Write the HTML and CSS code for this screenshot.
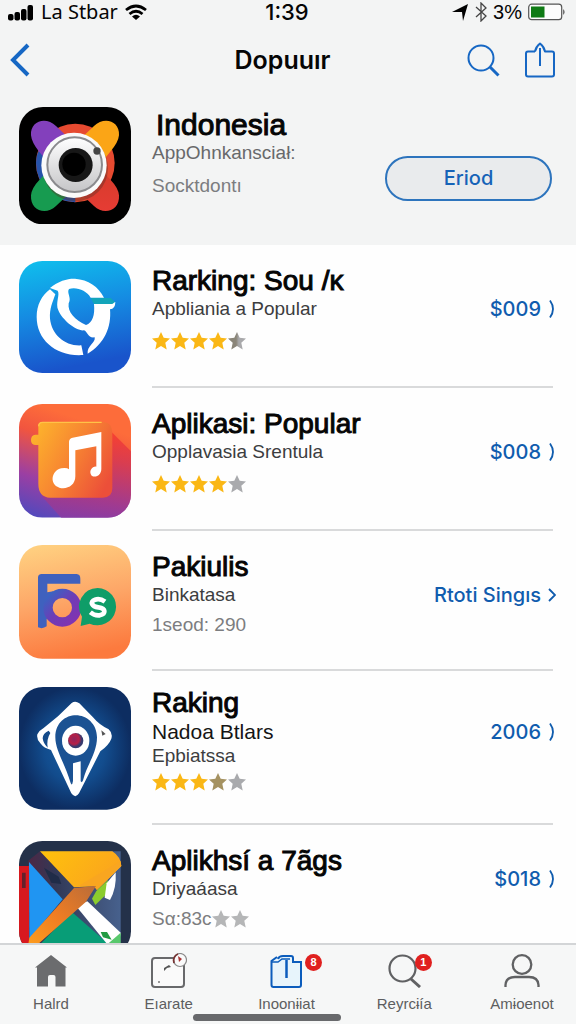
FILE: index.html
```html
<!DOCTYPE html>
<html lang="id">
<head>
<meta charset="utf-8">
<meta name="viewport" content="width=device-width, initial-scale=1">
<title>Dopuuır</title>
<link rel="stylesheet" href="styles.css">
</head>
<body>
<svg class="defs" width="0" height="0" aria-hidden="true">
  <defs>
    <symbol id="star" viewBox="0 0 18 18"><path d="M9 0 11.700 5.800l6.300.8-4.700 4.200 1.400 6.700L9 14.100 3.300 17.500l1.400-6.700L0 6.600 6.300 5.800z"/></symbol>
    <symbol id="chevron" viewBox="0 0 8 20"><path d="M2 1.500Q8 10 2 18.500" fill="none" stroke="currentColor" stroke-width="1.800"/></symbol>
    <linearGradient id="mixed"><stop offset=".45" stop-color="#8a8578"/><stop offset=".6" stop-color="#a9a9ab"/></linearGradient>
  </defs>
</svg>
<div class="app">
  <header class="top">
    <div class="status">
      <div class="status-side">
        <svg width="26" height="18" viewBox="0 0 26 18"><g fill="#000"><rect x="0" y="11" width="5.500" height="6.500" rx="2"/><rect x="6.500" y="9" width="5.500" height="8.500" rx="2"/><rect x="13" y="6" width="5.500" height="11.500" rx="2"/><rect x="19.500" y="2" width="5.500" height="15.500" rx="2"/></g></svg>
        <span class="carrier">La Stbar</span>
        <svg class="wifi" width="22" height="17" viewBox="0 0 22 17" fill="none" stroke="#000" stroke-width="2.800"><path d="M1 6Q11-2 21 6M4.500 10Q11 4.500 17.500 10"/><path d="M7 12.500Q11 9 15 12.500L11 16z" fill="#000" stroke="none"/></svg>
      </div>
      <time class="clock">1:39</time>
      <div class="status-side end">
        <svg width="17" height="17" viewBox="0 0 17 17"><path d="M0 8 16 0 11 17 10 8z"/></svg>
        <svg width="12" height="20" viewBox="0 0 12 20" fill="none" stroke="#444" stroke-width="1.300"><path d="M1 5 11 14 6 19V1L11 6 1 15"/></svg>
        <span class="level">3%</span>
        <svg width="38" height="18" viewBox="0 0 38 18"><rect x=".7" y="1.200" width="33" height="15.500" rx="3" fill="#fcfcfc" stroke="#555" stroke-width="1.200"/><rect x="3" y="3.500" width="13.500" height="11" fill="#0e7a14"/><path d="M35.200 6Q38 9 35.200 12z" fill="#555"/></svg>
      </div>
    </div>
    <nav class="nav">
      <button class="icon-btn" aria-label="Back"><svg width="20" height="34" viewBox="0 0 20 34"><path d="M18 2 3 17 18 32" fill="none" stroke="#1667c4" stroke-width="4"/></svg></button>
      <h1 class="nav-title">Dopuuır</h1>
      <div class="nav-actions">
        <button class="icon-btn" aria-label="Search"><svg width="33" height="33" viewBox="0 0 33 33" fill="none" stroke="#1667c4"><circle cx="14" cy="14" r="12.500" stroke-width="2"/><path d="M23 23 31.500 31.500" stroke-width="3"/></svg></button>
        <button class="icon-btn" aria-label="Share"><svg width="30" height="36" viewBox="0 0 30 36" fill="none" stroke="#1667c4" stroke-width="2"><path d="M10 9.500H3Q1 9.500 1 11.500V32.500Q1 34.500 3 34.500H27Q29 34.500 29 32.500V11.500Q29 9.500 27 9.500H20Q19 4.500 15 1.500 11 4.500 10 9.500" stroke-linejoin="round"/><path d="M15 6V24"/></svg></button>
      </div>
    </nav>
    <section class="hero">
      <svg class="app-icon" viewBox="57 35 336 352" aria-hidden="true">
        <defs>
          <linearGradient id="lens" x1="0" y1="0" x2="0" y2="1"><stop offset="0" stop-color="#fff"/><stop offset="1" stop-color="#c5c5c7"/></linearGradient>
          <linearGradient id="leafR" x1="0" y1="0" x2="0" y2="1"><stop offset="0" stop-color="#cf3c28"/><stop offset="1" stop-color="#e63c34"/></linearGradient>
        </defs>
        <rect x="57" y="35" width="336" height="352" rx="72"/>
        <circle cx="226" cy="203" r="118" fill="#e64a30"/>
        <path d="M108 203A118 118 0 0 0 226 321V150L125 150Q108 175 108 203" fill="#2653aa"/>
        <path d="M93 120C90 76 138 62 168 92L250 170 185 250 118 170Q95 142 93 120" fill="#8340bc"/>
        <path d="M357 120C360 76 312 62 282 92L200 170 265 250 330 170Q355 142 357 120" fill="#fba516"/>
        <path d="M93 300C90 346 138 362 168 332L250 255 185 180 118 254Q95 278 93 300" fill="#179b50"/>
        <path d="M357 300C360 346 312 362 282 332L200 255 265 180 332 254Q355 278 357 300" fill="url(#leafR)"/>
        <ellipse cx="226" cy="219" rx="98" ry="99" fill="#5a3026" opacity=".4"/>
        <circle cx="222" cy="210" r="98" fill="#fafafa"/>
        <circle cx="224" cy="208" r="82" fill="url(#lens)" stroke="#8b8b8e" stroke-width="6"/>
        <circle cx="227" cy="209" r="51" fill="#171717"/><circle cx="222" cy="207" r="35" fill="#000"/>
        <circle cx="291" cy="167" r="11" fill="#444"/>
      </svg>
      <div class="info">
        <h2 class="title hero-title">Indonesia</h2>
        <p class="sub muted">AppOhnkansciał:</p>
        <p class="note">Socktdontı</p>
      </div>
      <button class="pill">Eriod</button>
    </section>
  </header>

  <main class="list">
    <article class="row">
      <svg class="app-icon" viewBox="57 37 336 336" aria-hidden="true">
        <defs><linearGradient id="sky" x1="0" y1="0" x2=".2" y2="1"><stop offset="0" stop-color="#0fc0ed"/><stop offset=".5" stop-color="#158be2"/><stop offset="1" stop-color="#1954cb"/></linearGradient></defs>
        <rect x="57" y="37" width="336" height="336" rx="70" fill="url(#sky)"/>
        <g fill="#fff">
          <path d="M150 122 166 137C158 160 148 180 150 210C155 258 195 293 244 290L250 319C170 325 110 275 110 205C110 170 125 140 150 122"/>
          <path d="M150 118C175 96 205 89 225 90C265 93 295 113 312 147H272C260 126 230 114 207 121C199 132 216 148 206 164C202 190 225 215 258 229C278 222 285 200 282 166L346 160Q346 181 330 182C335 235 313 286 263 315C260 292 288 282 284 266C265 270 262 248 252 245C228 248 186 213 175 185C165 163 181 138 173 126z"/>
        </g>
        <path d="M272 148H332L345 160 337 166H282z" fill="#13a5ba"/>
      </svg>
      <div class="content">
        <div class="info">
          <h2 class="title">Rarking: Sou /ĸ</h2>
          <p class="sub">Apbliania a Popular</p>
          <div class="stars" role="img" aria-label="4"><svg><use href="#star"/></svg><svg><use href="#star"/></svg><svg><use href="#star"/></svg><svg><use href="#star"/></svg><svg class="half"><use href="#star"/></svg></div>
        </div>
        <a class="price" href="#">$009 <svg><use href="#chevron"/></svg></a>
      </div>
    </article>

    <article class="row">
      <svg class="app-icon" viewBox="57 37 336 341" aria-hidden="true">
        <defs>
          <linearGradient id="dusk" x1=".15" y1="1" x2=".45" y2=".1"><stop offset="0" stop-color="#5149bd"/><stop offset=".35" stop-color="#9b3fa3"/><stop offset=".75" stop-color="#f1553f"/><stop offset="1" stop-color="#fd6c3a"/></linearGradient>
          <linearGradient id="amber" x1="0" y1=".2" x2="1" y2=".7"><stop offset="0" stop-color="#fdb32c"/><stop offset=".5" stop-color="#f78432"/><stop offset="1" stop-color="#ec4f39"/></linearGradient>
          <linearGradient id="shade" x1=".6" y1="0" x2=".5" y2="1"><stop offset="0" stop-color="#f5362f"/><stop offset="1" stop-color="#8f3aa0"/></linearGradient>
          <clipPath id="clip2"><rect x="57" y="37" width="336" height="341" rx="70"/></clipPath>
        </defs>
        <g clip-path="url(#clip2)">
          <rect x="57" y="37" width="336" height="341" fill="url(#dusk)"/>
          <path d="M334 120 400 186V380H185L125 313z" fill="url(#shade)" opacity=".8"/>
          <path d="M126 91H310Q337 92 337 125V290Q337 318 308 318H150Q115 316 115 276V160H105Q93 159 93 145 93 130 106 129H115V103Q115 91 126 91" fill="url(#amber)"/>
          <path d="M116 104Q116 92 128 92H305" stroke="#ffc247" stroke-width="4" fill="none"/>
          <path d="M207 151Q207 140 218 138L304 121V232C304 250 287 260 275 252C264 238 278 223 289 225V164L226 176V254C226 282 201 294 178 288C147 278 154 237 184 230Q200 227 207 233z" fill="#fff"/>
        </g>
      </svg>
      <div class="content">
        <div class="info">
          <h2 class="title">Aplikasi: Popular</h2>
          <p class="sub">Opplavasia Srentula</p>
          <div class="stars" role="img" aria-label="4"><svg><use href="#star"/></svg><svg><use href="#star"/></svg><svg><use href="#star"/></svg><svg><use href="#star"/></svg><svg class="off"><use href="#star"/></svg></div>
        </div>
        <a class="price" href="#">$008 <svg><use href="#chevron"/></svg></a>
      </div>
    </article>

    <article class="row short">
      <svg class="app-icon" viewBox="57 41 336 341" aria-hidden="true">
        <defs>
          <linearGradient id="peach" x1=".2" y1="0" x2=".4" y2="1"><stop offset="0" stop-color="#ffd080"/><stop offset=".5" stop-color="#fda768"/><stop offset="1" stop-color="#fc7a3e"/></linearGradient>
          <linearGradient id="violet" x1="0" y1="0" x2="1" y2="1"><stop offset="0" stop-color="#3567c3"/><stop offset=".5" stop-color="#6f3cb6"/><stop offset="1" stop-color="#8233b0"/></linearGradient>
        </defs>
        <rect x="57" y="41" width="336" height="341" rx="70" fill="url(#peach)"/>
        <path d="M114 139Q114 128 125 128H230Q241 129 241 142V157H142V183L160 180 150 270 140 262V285Q128 294 114 288z" fill="#3f61be"/>
        <ellipse cx="187" cy="229" rx="43" ry="43" fill="none" stroke="url(#violet)" stroke-width="28"/>
        <path d="M293 170A56 56 0 1 1 269 277L242 284 246 256A56 56 0 0 1 293 170" fill="#0f9d68"/>
        <path d="M315 211Q300 200 285 205C268 211 275 226 295 228C319 231 318 248 299 252Q284 254 271 243" fill="none" stroke="#fff" stroke-width="14"/>
      </svg>
      <div class="content">
        <div class="info">
          <h2 class="title">Pakiulis</h2>
          <p class="sub">Binkatasa</p>
          <p class="note">1seod: 290</p>
        </div>
        <a class="price" href="#">Rtoti Singıs <svg class="straight" viewBox="0 0 8 14"><path d="M1 1 7 7 1 13" fill="none" stroke="currentColor" stroke-width="1.800"/></svg></a>
      </div>
    </article>

    <article class="row dense">
      <svg class="app-icon" viewBox="57 33 336 368" aria-hidden="true">
        <defs>
          <radialGradient id="navy"><stop offset="0" stop-color="#1760a5"/><stop offset=".55" stop-color="#124c8d"/><stop offset="1" stop-color="#0d2d61"/></radialGradient>
          <radialGradient id="ruby" cx=".4" cy=".4"><stop offset="0" stop-color="#8e255d"/><stop offset=".65" stop-color="#b71f46"/><stop offset="1" stop-color="#37396d"/></radialGradient>
        </defs>
        <rect x="57" y="33" width="336" height="368" rx="72" fill="url(#navy)"/>
        <path d="M215 81Q226 73 238 82L279 124Q298 147 326 160 339 172 334 188 327 207 301 226L237 352Q226 369 214 352L153 222Q132 217 121 202 109 190 112 175 117 164 130 157L174 121z" fill="#fff"/>
        <path d="M146 164Q128 172 128 187 130 203 143 215 139 190 151 171z" fill="#154b8a"/>
        <path d="M228 118C197 118 166 140 166 184C166 224 194 260 212 321Q216 332 219 315V262L242 256V316Q247 323 250 310C260 268 291 232 291 184C291 143 259 118 228 118" fill="#1b5293"/>
        <ellipse cx="227" cy="194" rx="41" ry="45" fill="#fff"/><circle cx="227" cy="194" r="23" fill="url(#ruby)"/>
        <path d="M304 163 317 174 307 179z" fill="#555"/>
      </svg>
      <div class="content">
        <div class="info">
          <h2 class="title">Raking</h2>
          <p class="sub strong">Nadoa Btlars</p>
          <p class="sub">Epbiatssa</p>
          <div class="stars" role="img" aria-label="3"><svg><use href="#star"/></svg><svg><use href="#star"/></svg><svg><use href="#star"/></svg><svg class="dim"><use href="#star"/></svg><svg class="off"><use href="#star"/></svg></div>
        </div>
        <a class="price" href="#">2006 <svg><use href="#chevron"/></svg></a>
      </div>
    </article>

    <article class="row last">
      <svg class="app-icon" viewBox="57 45 336 341" aria-hidden="true">
        <defs>
          <clipPath id="clip5"><rect x="57" y="45" width="336" height="341" rx="70"/></clipPath>
          <linearGradient id="gold" x1="0" y1="0" x2="1" y2=".4"><stop offset="0" stop-color="#ffc20c"/><stop offset="1" stop-color="#fba51d"/></linearGradient>
          <linearGradient id="rust" x1="1" y1="0" x2="0" y2="1"><stop offset="0" stop-color="#b96c39"/><stop offset=".5" stop-color="#f07d23"/><stop offset="1" stop-color="#ffa31c"/></linearGradient>
          <linearGradient id="slate" x1="0" y1="0" x2="1" y2="0"><stop offset="0" stop-color="#4d2744"/><stop offset=".3" stop-color="#323957"/><stop offset="1" stop-color="#47618d"/></linearGradient>
        </defs>
        <g clip-path="url(#clip5)">
          <rect x="57" y="45" width="336" height="341" fill="#243149"/>
          <path d="M85 104 120 76H362V360H86z" fill="url(#slate)"/>
          <path d="M57 120H87V386H57z" fill="#d7191f"/>
          <path d="M66 140H77V186H66z" fill="#64212c"/>
          <path d="M87 108 188 220 88 340z" fill="#2095f2"/>
          <path d="M132 125 176 152 184 174 154 170z" fill="#202c48"/>
          <path d="M120 76H337Q362 92 364 120L291 192 282 181 222 184z" fill="url(#gold)"/>
          <path d="M362 105 364 120 291 192 282 181 235 180z" fill="#f9a620"/>
          <path d="M90 386 215 257 362 386z" fill="#089d77"/>
          <path d="M228 240 262 226 362 320 358 345 322 355z" fill="#fff"/>
          <path d="M302 318 321 318 335 341 309 334z" fill="#229b43"/><path d="M322 355 362 320V375z" fill="#58c86c"/>
          <path d="M88 335 222 186 288 180 258 227 102 365 80 386z" fill="url(#rust)"/>
          <path d="M289 195 324 162 320 204 286 237 276 218z" fill="#8bcc2d"/><path d="M320 172 347 139Q350 188 330 222L314 215z" fill="#fff"/>
        </g>
      </svg>
      <div class="content">
        <div class="info">
          <h2 class="title">Aplikhsí a 7ãgs</h2>
          <p class="sub">Driyaáasa</p>
          <div class="note rated">Sα:83c<span class="stars"><svg class="pale"><use href="#star"/></svg><svg class="pale"><use href="#star"/></svg></span></div>
        </div>
        <a class="price" href="#">$018 <svg><use href="#chevron"/></svg></a>
      </div>
    </article>
  </main>

  <footer class="bar">
    <nav class="tabs">
      <a class="tab" href="#"><span class="glyph"><svg width="32" height="34" viewBox="0 0 32 34"><path d="M16 1 32 13.500H30.500V32.500H20.500V23Q20.500 21 18.500 21H15Q13 21 13 23V32.500H2V13.500H0z" fill="#6b6c6e"/></svg></span>Halrd</a>
      <a class="tab" href="#"><span class="glyph"><svg width="36" height="36" viewBox="0 0 36 36" fill="none"><rect x="1" y="5" width="32" height="29" rx="3" fill="#fafafa" stroke="#68696b" stroke-width="2"/><path d="M13 18V15L18 12 20 14 16 15z" fill="#555"/><circle cx="8" cy="29" r="1" fill="#777"/><circle cx="29" cy="7" r="6.500" fill="#fafafa" stroke="#888" stroke-width="1.200"/><path d="M23 10A7 7 0 0 1 27 1" stroke="#733" stroke-width="1.800"/><path d="M27 3 31 6 28 9z" fill="#a33"/></svg></span>Eıarate</a>
      <a class="tab" href="#"><span class="glyph"><svg width="33" height="34" viewBox="0 0 33 34" fill="none" stroke="#0b5cbc" stroke-width="2"><path d="M7 3 1.500 7V31Q1.500 33 3.500 33H29Q31 33 31 31V8H23V4Q23 2 21 2H13Q9 2 8 5" fill="#e7f4fb"/><path d="M2 8H8L12 5H20" stroke-width="1.500"/><path d="M16.500 6V24" stroke-width="2.500"/></svg><b class="badge">8</b></span>Inoonɨiat</a>
      <a class="tab" href="#"><span class="glyph"><svg width="33" height="34" viewBox="0 0 33 34" fill="none" stroke="#606163"><circle cx="14.500" cy="14.500" r="13" stroke-width="2.200"/><path d="M23 25 32 33" stroke-width="3"/></svg><b class="badge near">1</b></span>Reyrcɨía</a>
      <a class="tab" href="#"><span class="glyph"><svg width="36" height="34" viewBox="0 0 36 34" fill="none" stroke="#606163" stroke-width="2.300"><circle cx="18" cy="10.500" r="9.300"/><path d="M1.500 33V31Q2 23 11 23H25Q34 23 34.500 31V33"/></svg></span>Amɨoenot</a>
    </nav>
    <div class="home-line"></div>
  </footer>
</div>
</body>
</html>
```

FILE: styles.css
```css
* { box-sizing: border-box; }
body { margin: 0; background: #fefefe; color: #050505; font-family: "Liberation Sans", Arial, sans-serif; }
h1, h2, p { margin: 0; }
svg { display: block; flex: none; }
a { color: inherit; text-decoration: none; }
button { font: inherit; cursor: pointer; }
.defs { position: absolute; }

.app { display: flex; flex-direction: column; height: 100vh; }

.top { flex: none; background: #f3f4f4; }
.status { display: grid; grid-template-columns: 1fr auto 1fr; align-items: center; height: 24px; padding: 0 10px 0 8px; font-size: 22px; line-height: 24px; }
.status-side { display: flex; align-items: center; gap: 7px; }
.status-side.end { justify-content: flex-end; gap: 6px; }
.carrier { font-family: "Noto Sans", sans-serif; font-size: 20px; }
.clock { font-family: Inter, sans-serif; font-weight: 500; }
.level { font-size: 20px; }

.nav { display: grid; grid-template-columns: 1fr auto 1fr; align-items: center; height: 72px; padding: 0 21px 0 10px; }
.icon-btn { justify-self: start; padding: 0; border: 0; background: none; }
.nav-title { font-family: Inter, sans-serif; font-size: 25px; line-height: 32px; font-weight: 600; }
.nav-actions { display: flex; justify-content: flex-end; align-items: center; gap: 25px; }

.hero { display: flex; gap: 21px; padding: 11px 24px 21px 19px; }
.app-icon { width: 112px; }
.info { flex: 1; min-width: 0; white-space: nowrap; }
.title { font-size: 28px; line-height: 36px; font-weight: 400; -webkit-text-stroke: 1px currentColor; }
.hero-title { padding-left: 4px; font-size: 30px; }
.sub { font-size: 19px; line-height: 20px; color: #3c3d3f; }
.muted { color: #68696b; }
.strong { color: #151515; font-size: 21px; }
.note { margin-top: 8px; font-size: 19px; line-height: 24px; color: #7c7d80; }
.hero .note { margin-top: 11px; }
.pill { align-self: center; margin-top: 25px; width: 167px; height: 45px; padding: 0; border: 2px solid #2d74bd; border-radius: 23px; background: #e9ebed; color: #1663b8; font-family: Inter, sans-serif; font-size: 20px; font-weight: 500; }

.list { flex: 1; min-height: 0; overflow-y: auto; scrollbar-width: none; }
.row { display: flex; align-items: flex-start; gap: 21px; padding-left: 19px; padding-right: 20px; }
.row > .app-icon { margin-top: 16px; }
.short > .app-icon { margin-top: 14px; }
.content { flex: 1; min-width: 0; display: flex; align-items: flex-start; margin-right: 3px; padding: 18px 0 33px; border-bottom: 2px solid #d9dadb; }
.short .content { padding-bottom: 32px; }
.dense .content { padding: 15px 0 29px; }
.dense .title { line-height: 34px; }
.dense .sub { line-height: 24px; }
.dense .stars { margin-top: 2px; }
.price { display: flex; align-items: center; gap: 7px; height: 36px; margin: 28px -3px 0 0; color: #105cae; font-family: Inter, sans-serif; font-size: 20px; font-weight: 500; white-space: nowrap; }
.last .price { margin-top: 18px; }
.price svg { width: 8px; height: 20px; }
.price .straight { height: 14px; }

.stars { display: flex; align-items: center; gap: 1px; height: 24px; margin-top: 10px; }
.stars svg { width: 18px; height: 18px; fill: #fab715; }
.stars .off { fill: #a9aaad; }
.stars .half { fill: url(#mixed); }
.stars .dim { fill: #a59261; }
.stars .pale { fill: #b5b6b7; }
.rated { display: flex; align-items: center; }
.rated .stars { margin: 0; }

.bar { flex: none; border-top: 2px solid #d3d5d7; background: #f6f7f7; }
.tabs { display: flex; justify-content: space-between; padding: 8px 18px 0 15px; }
.tab { display: flex; flex-direction: column; align-items: center; gap: 5px; width: 72px; font-size: 15px; line-height: 20px; color: #5d5e60; white-space: nowrap; }
.glyph { position: relative; display: flex; align-items: center; height: 36px; }
.badge { position: absolute; left: 35px; top: 1px; width: 17px; height: 17px; border-radius: 50%; background: #e0201f; color: #fff; font-size: 11px; line-height: 17px; text-align: center; }
.near { left: 27px; }
.home-line { width: 148px; height: 7px; margin: 0 0 3px 193px; border-radius: 4px; background: #68696c; }
@media (min-width: 640px) {
  .home-line { margin-left: auto; margin-right: auto; }
}
```
